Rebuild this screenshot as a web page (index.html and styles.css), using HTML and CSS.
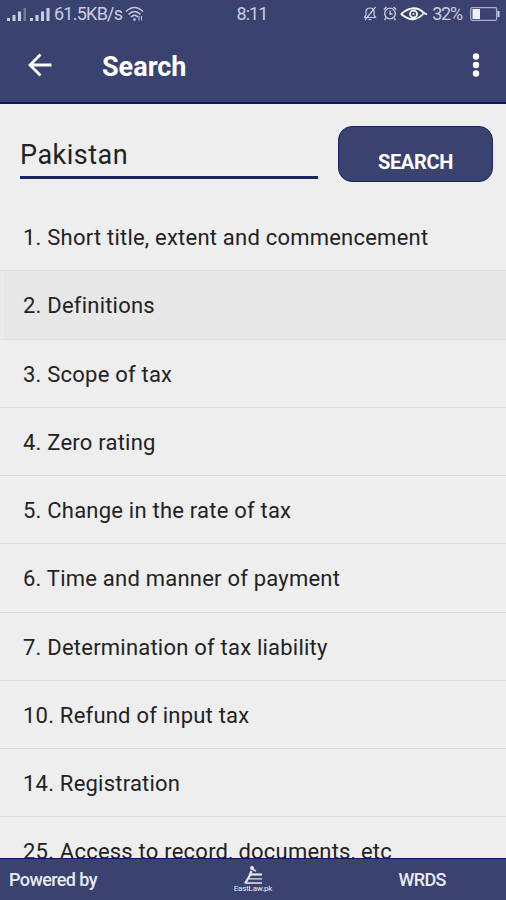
FILE: index.html
```html
<!DOCTYPE html>
<html lang="en">
<head>
    <meta charset="UTF-8">
    <meta name="viewport" content="width=device-width, initial-scale=1.0">
    <title>Search</title>
    <link rel="stylesheet" href="styles.css">
</head>
<body>
    <header>
        <div class="status-bar">
            <div class="status-left">
                <svg class="signal" width="44" height="16" viewBox="0 0 44 16">
                    <g fill="#c9cde2">
                        <rect x="0" y="12" width="3" height="3"/>
                        <rect x="5.5" y="9" width="3" height="6"/>
                        <rect x="11" y="5.5" width="3" height="9.5"/>
                        <rect x="16.500" y="2" width="2.500" height="13" opacity="0.4"/>
                        <rect x="23" y="12" width="3" height="3"/>
                        <rect x="28.5" y="9" width="3" height="6"/>
                        <rect x="34" y="5.5" width="3" height="9.5"/>
                        <rect x="39.5" y="2" width="3" height="13"/>
                    </g>
                </svg>
                <span class="speed">61.5KB/s</span>
                <svg class="wifi" width="19" height="16" viewBox="0 0 19 16" fill="none" stroke="#c9cde2" stroke-width="1.5">
                    <path d="M1 5.5Q9.500 -2.500 18 5.500M3.500 8.500Q9.500 2.500 15.500 8.500M6 11Q9.500 7.500 13 11"/>
                    <circle cx="9.500" cy="13.500" r="1.300" fill="#c9cde2" stroke="none"/>
                    <path d="M14 10v4.500M16.500 10v4.500" stroke-width="1"/>
                </svg>
            </div>
            <span class="clock">8:11</span>
            <div class="status-right">
                <svg class="bell" width="14" height="15" viewBox="0 0 14 15" fill="none" stroke="#c9cde2" stroke-width="1.200">
                    <path d="M1.500 11.500h11L11 9V5.500C11 3.500 9.500 2 7 2S3 3.500 3 5.500V9zM5.500 13.500h3M12.500 1L2 14"/>
                </svg>
                <svg class="alarm" width="14" height="15" viewBox="0 0 14 15" fill="none" stroke="#c9cde2" stroke-width="1.300">
                    <circle cx="7" cy="7.500" r="5.300"/>
                    <path d="M7 4.500V8h2.500M.8 3.500L3.500 1M13.200 3.500L10.500 1M3 12l-1.500 2M11 12l1.500 2"/>
                </svg>
                <svg class="eye" width="28" height="14" viewBox="0 0 28 14" fill="none" stroke="#fff" stroke-width="1.800">
                    <path d="M1 7Q14 -4 24 6L27 7.500M1 7Q14 18 24 6"/>
                    <circle cx="13.500" cy="7" r="3.500"/>
                    <circle cx="13.500" cy="7" r="1" fill="#fff" stroke="none"/>
                </svg>
                <span class="percent">32%</span>
                <svg class="battery" width="30" height="14" viewBox="0 0 30 14">
                    <rect x=".7" y=".7" width="26" height="12.600" rx="1.500" fill="none" stroke="#a9aeca" stroke-width="1.300"/>
                    <rect x="2.500" y="2" width="7.500" height="10" fill="#eef0f8"/>
                    <rect x="27.500" y="4" width="2" height="6" fill="#c9cde2"/>
                </svg>
            </div>
        </div>
        <div class="app-bar">
            <svg class="back" width="24" height="24" viewBox="0 0 24 24" fill="none" stroke="#fff" stroke-width="2.800">
                <path d="M23.500 12H2.500M12.500 1.500L2 12l10.500 10.500"/>
            </svg>
            <h1>Search</h1>
            <svg class="more" width="8" height="24" viewBox="0 0 8 24" fill="#fff">
                <circle cx="4" cy="3.500" r="3.200"/>
                <circle cx="4" cy="12" r="3.200"/>
                <circle cx="4" cy="20.500" r="3.200"/>
            </svg>
        </div>
    </header>

    <main>
        <div class="search-form">
            <input type="text" id="userInput" value="Pakistan">
            <button id="searchButton">SEARCH</button>
        </div>
        <ul class="results">
            <li>1. Short title, extent and commencement</li>
            <li class="pressed">2. Definitions</li>
            <li>3. Scope of tax</li>
            <li>4. Zero rating</li>
            <li>5. Change in the rate of tax</li>
            <li>6. Time and manner of payment</li>
            <li>7. Determination of tax liability</li>
            <li>10. Refund of input tax</li>
            <li>14. Registration</li>
            <li>25. Access to record, documents, etc</li>
        </ul>
    </main>

    <footer>
        <span class="powered">Powered by</span>
        <div class="logo">
            <svg width="20" height="19" viewBox="0 0 20 19" fill="none" stroke="#e6e8f3">
                <circle cx="9" cy="2" r="2" fill="#e6e8f3" stroke="none"/>
                <path d="M9 3L13 5" stroke-width="1.500"/>
                <path d="M8.500 5L6 11L2 17.500" stroke-width="2.200"/>
                <path d="M7 8.500h12" stroke-width="2.200"/>
                <path d="M6 12.800h13M3 17h16" stroke-width="1.300"/>
            </svg>
            <span>EastLaw.pk</span>
        </div>
        <span class="company">WRDS</span>
    </footer>
</body>
</html>
```
FILE: styles.css
```css
* {
    box-sizing: border-box;
}

body {
    font-family: Roboto, sans-serif;
    margin: 0;
    height: 900px;
    display: flex;
    flex-direction: column;
    overflow: hidden;
    background-color: #eee;
    color: #222;
}

header {
    flex: none;
    height: 104px;
    background-color: #3a426f;
    border-bottom: 2px solid #10155f;
    color: #fff;
}

.status-bar {
    display: grid;
    grid-template-columns: 1fr auto 1fr;
    align-items: center;
    height: 27px;
    padding: 0 6px 0 7px;
    color: #c9cde2;
    font-size: 18px;
}

.status-left,
.status-right {
    display: flex;
    align-items: center;
}

.status-right {
    justify-content: flex-end;
}

.speed {
    margin: 0 3px;
    letter-spacing: -0.75px;
}

.clock {
    padding-right: 3px;
    letter-spacing: -0.9px;
}

.percent {
    letter-spacing: -1.2px;
}

.eye {
    margin: 0 4px 0 3px;
}

.alarm {
    margin-left: 6px;
}

.battery {
    margin-left: 8px;
}

.app-bar {
    display: flex;
    align-items: center;
    height: 76px;
    padding: 0 26px 0 28px;
}

h1 {
    flex: 1;
    margin: 4px 0 0 50px;
    font-size: 27px;
    font-weight: 700;
}

main {
    flex: 1;
    min-height: 0;
    overflow: hidden;
}

.search-form {
    display: flex;
    height: 99px;
    padding: 22px 13px 0 20px;
}

input[type="text"] {
    width: 298px;
    height: 53px;
    margin-right: 20px;
    padding: 7px 0 0;
    border: none;
    border-bottom: 3px solid #1c2263;
    background: none;
    color: #222;
    font-family: inherit;
    font-size: 27px;
    letter-spacing: 0.5px;
    outline: none;
}

button {
    width: 155px;
    height: 56px;
    padding: 15px 0 0;
    border: 1px solid #1c2263;
    border-radius: 14px;
    background-color: #3a426f;
    color: #fff;
    font-family: inherit;
    font-size: 20px;
    font-weight: 700;
    letter-spacing: -0.3px;
}

.results {
    margin: 0;
    padding: 0;
    list-style: none;
}

li {
    height: 68.25px;
    padding-left: 23px;
    border-bottom: 1px solid #dcdcdc;
    font-size: 22px;
    letter-spacing: 0.22px;
    line-height: 70px;
    white-space: nowrap;
}

.pressed {
    background-color: #e7e7e7;
    border-left: 4px solid #ebebeb;
    padding-left: 19px;
}

footer {
    flex: none;
    display: grid;
    grid-template-columns: 1fr 1fr 1fr;
    align-items: center;
    height: 42px;
    padding-left: 9px;
    border-top: 1px solid #10155f;
    background-color: #3a426f;
    color: #e9ebf5;
    font-size: 18px;
    font-weight: 500;
}

.powered,
.company {
    letter-spacing: -0.6px;
}

.logo {
    display: flex;
    flex-direction: column;
    align-items: center;
    margin-right: 9px;
    font-size: 8px;
    font-weight: 400;
    line-height: 8px;
    letter-spacing: -0.2px;
}

.company {
    padding-right: 2px;
    text-align: center;
}
```
